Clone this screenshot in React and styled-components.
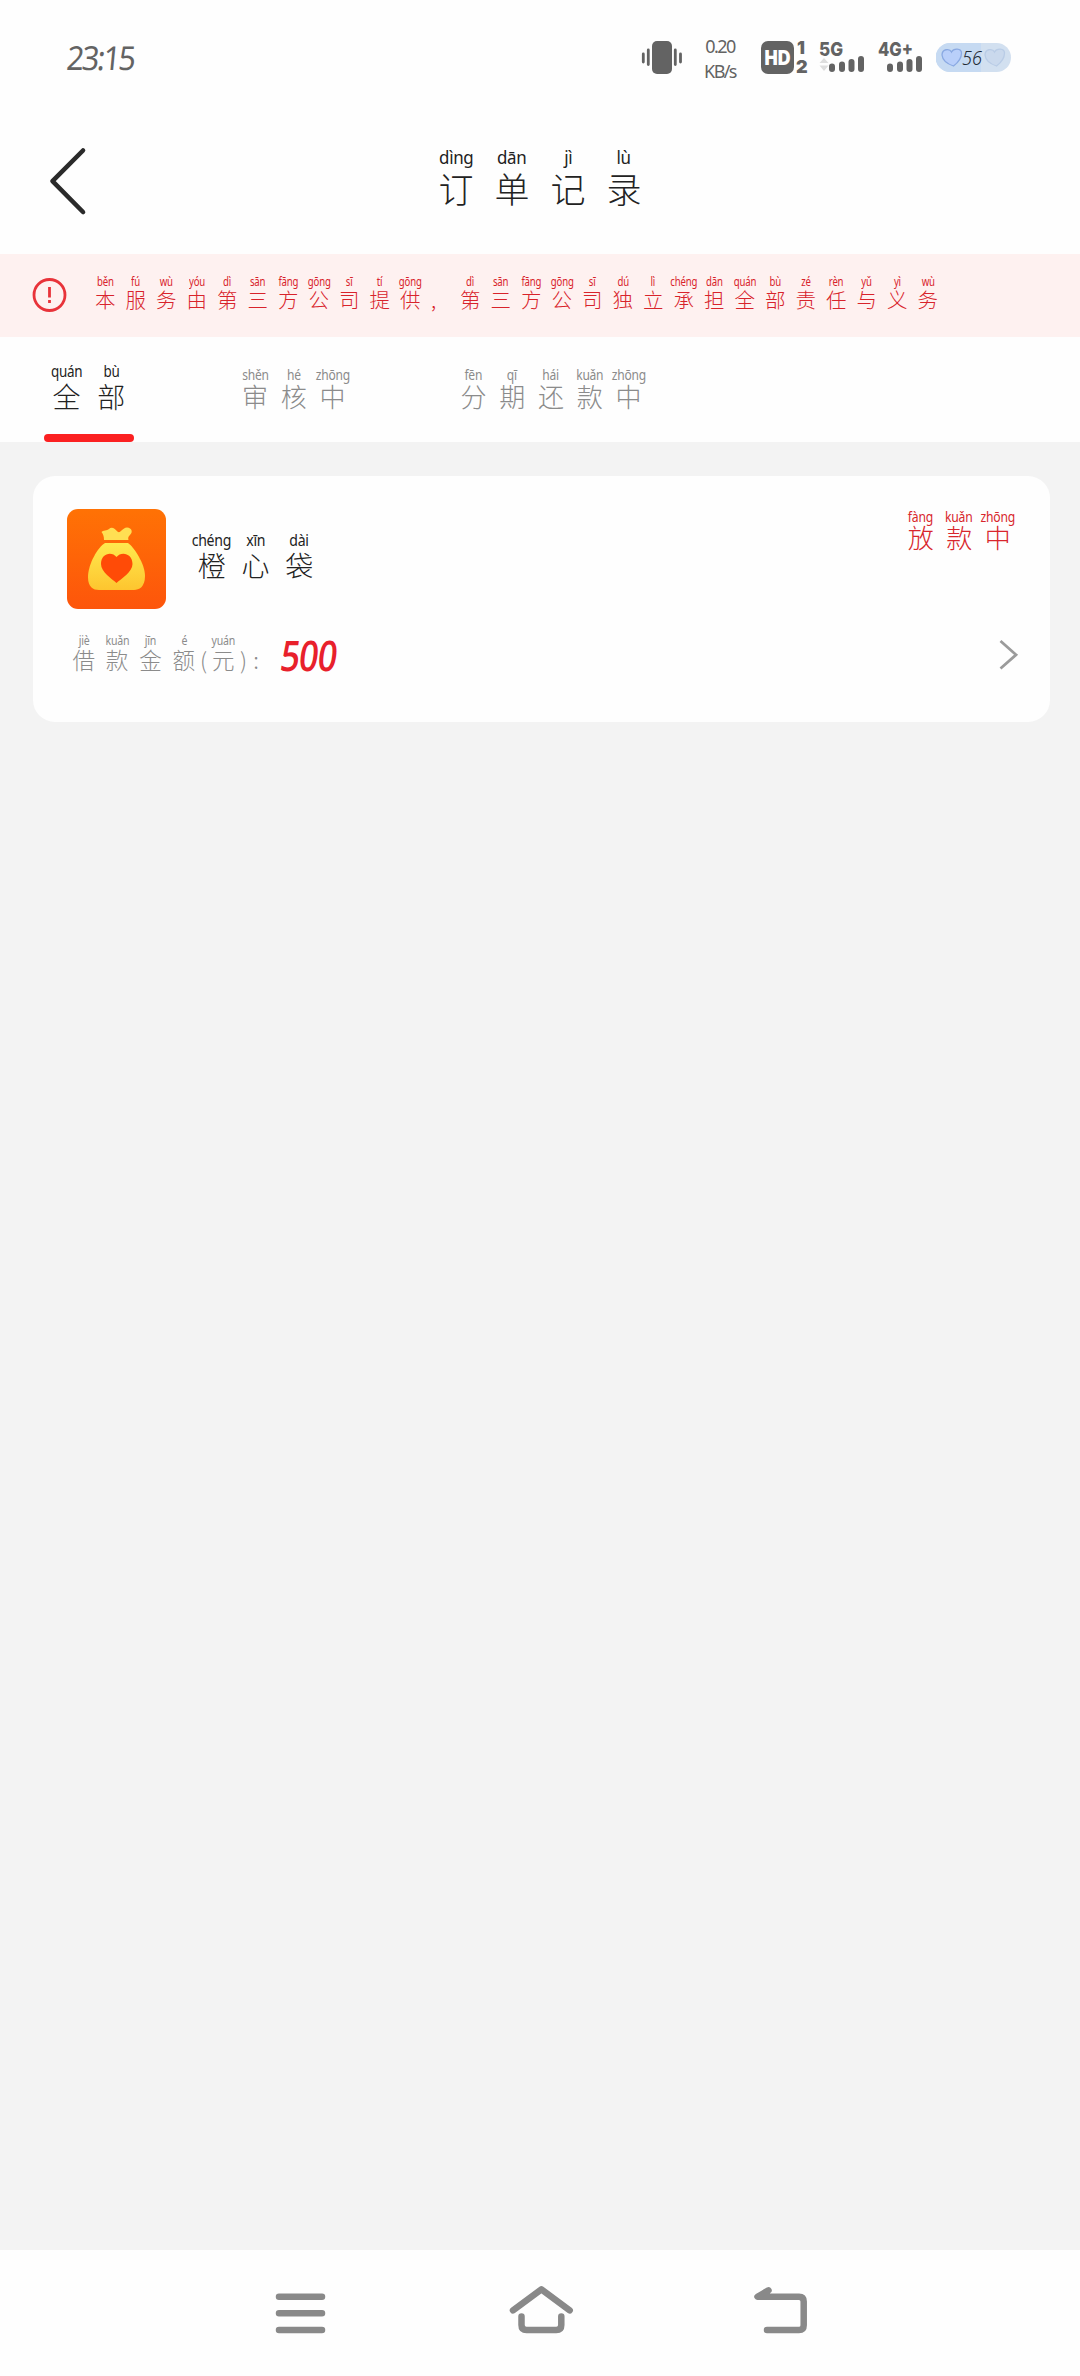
import React from 'react';
import styled, { createGlobalStyle } from 'styled-components';

const GlobalStyle = createGlobalStyle`
  * { box-sizing: border-box; }
  body {
    margin: 0;
    background: #f3f3f3;
    font-family: "Noto Sans", "Noto Sans CJK SC", sans-serif;
    font-weight: 300;
  }
  svg { display: block; flex: none; }
`;

const Screen = styled.div`
  width: 1080px;
  height: 2376px;
  display: flex;
  flex-direction: column;
  background: #f3f3f3;
`;

const StatusBar = styled.header`
  height: 108px;
  flex: none;
  display: flex;
  align-items: flex-start;
  padding: 36px 69px 0 67px;
  background: #fefefe;
  color: #636363;
`;

const Clock = styled.time`
  margin: -1px auto 0 0;
  font-size: 33px;
  line-height: 46px;
  letter-spacing: -2.3px;
  font-weight: 400;
  transform: scaleX(0.92) skewX(-6deg);
  transform-origin: 0 50%;
`;

const Speed = styled.div`
  width: 40px;
  margin: -2px 20px 0 17px;
  font-size: 18px;
  line-height: 25px;
  letter-spacing: -1.6px;
  font-weight: 400;
  text-align: center;
  white-space: nowrap;
`;

const TitleBar = styled.div`
  height: 146px;
  flex: none;
  display: grid;
  grid-template-columns: 100px 1fr 100px;
  background: #fefefe;
`;

const BackButton = styled.button`
  border: 0;
  padding: 35px 0 0 46px;
  background: none;
  display: flex;
  align-items: flex-start;
`;

const Title = styled.h1`
  margin: 0;
  padding-top: 37px;
  display: flex;
  justify-content: center;
  font-weight: 300;
`;

const Line = styled.span`
  display: flex;
  color: ${(p) => p.$color};
`;

const Cell = styled.span`
  width: ${(p) => p.$w}px;
  display: flex;
  flex-direction: column;
  align-items: center;
  white-space: nowrap;
`;

const Pinyin = styled.span`
  height: ${(p) => p.$h}px;
  line-height: ${(p) => p.$h}px;
  font-size: ${(p) => p.$size}px;
  font-weight: 400;
  letter-spacing: -0.02em;
  transform: scaleX(${(p) => p.$squeeze});
`;

const Hanzi = styled.span`
  height: ${(p) => p.$h}px;
  line-height: ${(p) => p.$h}px;
  font-size: ${(p) => p.$size}px;
  font-family: "Noto Sans CJK SC", sans-serif;
`;

const Notice = styled.section`
  height: 83px;
  flex: none;
  display: flex;
  align-items: flex-start;
  gap: 22px;
  padding: 21px 0 0 32px;
  background: #fef1f0;
`;

const AlertIcon = styled.svg`
  margin-top: 2px;
`;

const Tabs = styled.nav`
  height: 105px;
  flex: none;
  display: flex;
  gap: 102px;
  padding-left: 44px;
  background: #fefefe;
`;

const Tab = styled.div`
  display: flex;
  flex-direction: column;
  justify-content: space-between;
  padding-top: ${(p) => (p.$active ? 25 : 29)}px;
  &::after {
    content: "";
    height: 8px;
    border-radius: 4px;
    background: ${(p) => (p.$active ? '#fb2021' : 'transparent')};
  }
`;

const Content = styled.main`
  flex: 1;
  padding: 34px 30px 0 33px;
`;

const Card = styled.article`
  height: 246px;
  padding: 33px 33px 0 34px;
  border-radius: 22px;
  background: #fefefe;
`;

const CardHead = styled.div`
  display: flex;
  align-items: flex-start;
  height: 122px;
`;

const Name = styled.div`
  flex: 1;
  padding: 21px 0 0 24px;
`;

const CardRow = styled.div`
  display: flex;
  align-items: flex-start;
  padding-top: 3px;
`;

const Amount = styled.strong`
  margin: -2px auto 0 16px;
  font-family: "Open Sans", "Noto Sans", sans-serif;
  font-size: 42px;
  line-height: 46px;
  font-weight: 600;
  letter-spacing: -1px;
  color: #e8202b;
  transform: scaleX(0.81) skewX(-9deg);
  transform-origin: 0 50%;
`;

const Chevron = styled.svg`
  margin: 5px -2px 0 0;
`;

const SystemNav = styled.footer`
  height: 126px;
  flex: none;
  display: flex;
  justify-content: space-between;
  padding: 34px 269px 0 271px;
  background: #fefefe;
`;

const WIDE = { w: 56, py: 18, ph: 24, hz: 35, hh: 37, squeeze: 0.94 };
const SMALL = { w: 30.5, py: 12, ph: 14, hz: 20.5, hh: 21, squeeze: 0.8 };
const ACTIVE = { w: 44.8, py: 16, ph: 19, hz: 28, hh: 30, squeeze: 0.84 };
const TAB = { w: 38.8, py: 14, ph: 17, hz: 26, hh: 26, squeeze: 0.86 };
const NAME = { w: 43.7, py: 16, ph: 20, hz: 28, hh: 30, squeeze: 0.88 };
const LABEL = { w: 33.4, py: 12, ph: 14, hz: 22.5, hh: 22, squeeze: 0.88 };
const STATE = { w: 38.5, py: 14, ph: 15, hz: 26, hh: 26, squeeze: 0.87 };

function Annotated({ text, size, color }) {
  return (
    <Line $color={color}>
      {text.map(([hanzi, pinyin, width], i) => (
        <Cell key={i} $w={width || size.w}>
          <Pinyin $h={size.ph} $size={size.py} $squeeze={size.squeeze}>{pinyin}</Pinyin>
          <Hanzi $h={size.hh} $size={size.hz}>{hanzi}</Hanzi>
        </Cell>
      ))}
    </Line>
  );
}

const pair = (hanzi, pinyin) => {
  const sounds = pinyin.split(' ');
  return [...hanzi].map((h, i) => [h, sounds[i]]);
};

const noticeText = [
  ...pair('本服务由第三方公司提供', 'běn fú wù yóu dì sān fāng gōng sī tí gōng'),
  [',', '', 16],
  ['', '', 13.5],
  ...pair('第三方公司独立承担全部责任与义务', 'dì sān fāng gōng sī dú lì chéng dān quán bù zé rèn yǔ yì wù'),
];

const amountLabel = [
  ...pair('借款金额', 'jiè kuǎn jīn é'),
  ['(', '', 6],
  ['元', 'yuán'],
  [')', '', 7],
  [':', '', 18],
];

function StatusIcons() {
  return (
    <svg width="244" height="44" viewBox="0 0 244 44" fill="#636363" fontFamily="Inter, sans-serif" fontWeight="800">
      <rect x="1" y="5" width="33" height="33" rx="7" />
      <text x="4.5" y="29" fontSize="20" fill="#fff" fontWeight="900" textLength="26" lengthAdjust="spacingAndGlyphs">HD</text>
      <text x="37" y="17.500" fontSize="17.500" fontWeight="900">1</text>
      <text x="36" y="37" fontSize="18" fontWeight="900">2</text>
      <text x="59" y="20" fontSize="19" textLength="24" lengthAdjust="spacingAndGlyphs">5G</text>
      <path d="M59.500 27l4.500-5 4.500 5zM59.500 29.500l4.500 5.500 4.500-5.500z" fill="#dedede" />
      <rect x="69" y="27.5" width="6" height="8.5" rx="3" />
      <rect x="79" y="25.5" width="6" height="10.5" rx="3" />
      <rect x="88.500" y="23" width="6" height="13" rx="3" />
      <rect x="98" y="20" width="6" height="16" rx="3" />
      <text x="118" y="20" fontSize="19" textLength="35" lengthAdjust="spacingAndGlyphs">4G+</text>
      <rect x="127" y="27.5" width="6" height="8.5" rx="3" />
      <rect x="137" y="25.500" width="6" height="10.5" rx="3" />
      <rect x="146.500" y="23" width="6" height="13" rx="3" />
      <rect x="156" y="20" width="6" height="16" rx="3" />
    </svg>
  );
}

const HEART = 'M12 18C6 16 1 12 0.500 7C0.500 1 8 0 10 4C12 0 20 0 20 5C20 10 16 15 12 18Z';

const Battery = styled.svg`
  margin-left: -68px;
`;

export default function App() {
  return (
    <>
      <GlobalStyle />
      <Screen>
        <StatusBar>
          <Clock>23:15</Clock>
          <svg width="44" height="44" viewBox="0 0 44 44" fill="#636363">
            <rect x="13" y="5" width="20" height="33" rx="5" />
            <path d="M4.300 18v8M9.300 14v14.500M36.300 14v14.500M41.500 18v8" stroke="#636363" strokeWidth="2.800" strokeLinecap="round" />
          </svg>
          <Speed>0.20<br />KB/s</Speed>
          <StatusIcons />
          <Battery width="75" height="44" viewBox="0 0 75 44">
            <rect y="7" width="75" height="29" rx="14.500" fill="#d2e0f0" />
            <path d="M14 7h31v29h-31a14.500 14.500 0 0 1 0-29" fill="#c6daf2" />
            <path d={HEART} transform="translate(5.500 12)" fill="#b9cffa" stroke="#8aa9e2" strokeWidth="1.300" />
            <path d={HEART} transform="translate(48.500 12)" fill="#cad9ed" stroke="#b9cce6" strokeWidth="1.300" />
            <text x="26" y="29" fontSize="20" fontStyle="italic" fill="#222a35" textLength="20" lengthAdjust="spacingAndGlyphs">56</text>
          </Battery>
        </StatusBar>

        <TitleBar>
          <BackButton aria-label="返回">
            <svg width="42" height="76" viewBox="0 0 42 76" fill="none" stroke="#2a2a2a" strokeWidth="4.600" strokeLinecap="round" strokeLinejoin="round">
              <path d="M37 7.500L6.500 38.200L37 69" />
            </svg>
          </BackButton>
          <Title>
            <Annotated size={WIDE} color="#222" text={pair('订单记录', 'dìng dān jì lù')} />
          </Title>
        </TitleBar>

        <Notice>
          <AlertIcon width="36" height="36" viewBox="0 0 36 36" fill="none" stroke="#e8333a" strokeWidth="2.800">
            <circle cx="17.500" cy="18" r="15.500" />
            <path d="M17.500 10v10.500M17.500 23v3" />
          </AlertIcon>
          <Annotated size={SMALL} color="#d8232b" text={noticeText} />
        </Notice>

        <Tabs>
          <Tab $active>
            <Annotated size={ACTIVE} color="#222" text={pair('全部', 'quán bù')} />
          </Tab>
          <Tab>
            <Annotated size={TAB} color="#8b8b8b" text={pair('审核中', 'shěn hé zhōng')} />
          </Tab>
          <Tab>
            <Annotated size={TAB} color="#8b8b8b" text={pair('分期还款中', 'fēn qī hái kuǎn zhōng')} />
          </Tab>
        </Tabs>

        <Content>
          <Card>
            <CardHead>
              <svg width="99" height="100" viewBox="0 0 99 100">
                <defs>
                  <linearGradient id="tile" x1="0" y1="0" x2="0" y2="1">
                    <stop offset="0" stopColor="#ff7205" />
                    <stop offset="1" stopColor="#fd550b" />
                  </linearGradient>
                  <linearGradient id="bag" x1="0" y1="0" x2="0" y2="1">
                    <stop offset="0" stopColor="#ffe94e" />
                    <stop offset="1" stopColor="#fdc52f" />
                  </linearGradient>
                </defs>
                <rect width="99" height="100" rx="11" fill="url(#tile)" />
                <path d="M37 31C37 27 36 25 34.500 23C36 21 40 22 42 20C45 17 48 20 51 23C54 24 55 19 60 18.500C65 19 66 23 63 26C61 28 61 29 61.500 31Z" fill="#ffdf53" />
                <path d="M38 34H61C67 38 78 55 78 67C78 78 72 81 67 81H32C26 81 21 78 21 68C21 55 31 38 38 34Z" fill="url(#bag)" />
                <path d="M49.500 74C45 70 34 63 34 55C34 44 45 42 49.500 48C54 42 65.500 44 65.500 55C65.500 63 54 70 49.500 74Z" fill="#ff4b07" />
              </svg>
              <Name>
                <Annotated size={NAME} color="#222" text={pair('橙心袋', 'chéng xīn dài')} />
              </Name>
              <Annotated size={STATE} color="#d8262c" text={pair('放款中', 'fàng kuǎn zhōng')} />
            </CardHead>
            <CardRow>
              <Annotated size={LABEL} color="#8b8b8b" text={amountLabel} />
              <Amount>500</Amount>
              <Chevron width="20" height="32" viewBox="0 0 20 32" fill="none" stroke="#9b9b9b" strokeWidth="2.800">
                <path d="M1.500 2L17 15.800L1.500 29.500" />
              </Chevron>
            </CardRow>
          </Card>
        </Content>

        <SystemNav>
          <svg width="60" height="60" viewBox="0 0 60 60" stroke="#898989" strokeWidth="6.500" strokeLinecap="round">
            <path d="M8 12.700H51M8 29.300H51M8 46H51" />
          </svg>
          <svg width="68" height="60" viewBox="0 0 68 60" fill="none" stroke="#898989" strokeWidth="6.500" strokeLinecap="round" strokeLinejoin="round">
            <path d="M6 26.300L34.400 5.300L62.700 26.300M14.500 32.500V41Q14.500 46 19.500 46H49.300Q54.300 46 54.300 41V32.500" />
          </svg>
          <svg width="60" height="60" viewBox="0 0 60 60" fill="none" stroke="#898989" strokeWidth="6.500" strokeLinecap="round" strokeLinejoin="round">
            <path d="M17.500 6.300L6.500 12.700H48Q52.700 12.700 52.700 17.500V41.200Q52.700 46 48 46H16M11 10.500H16" />
          </svg>
        </SystemNav>
      </Screen>
    </>
  );
}
